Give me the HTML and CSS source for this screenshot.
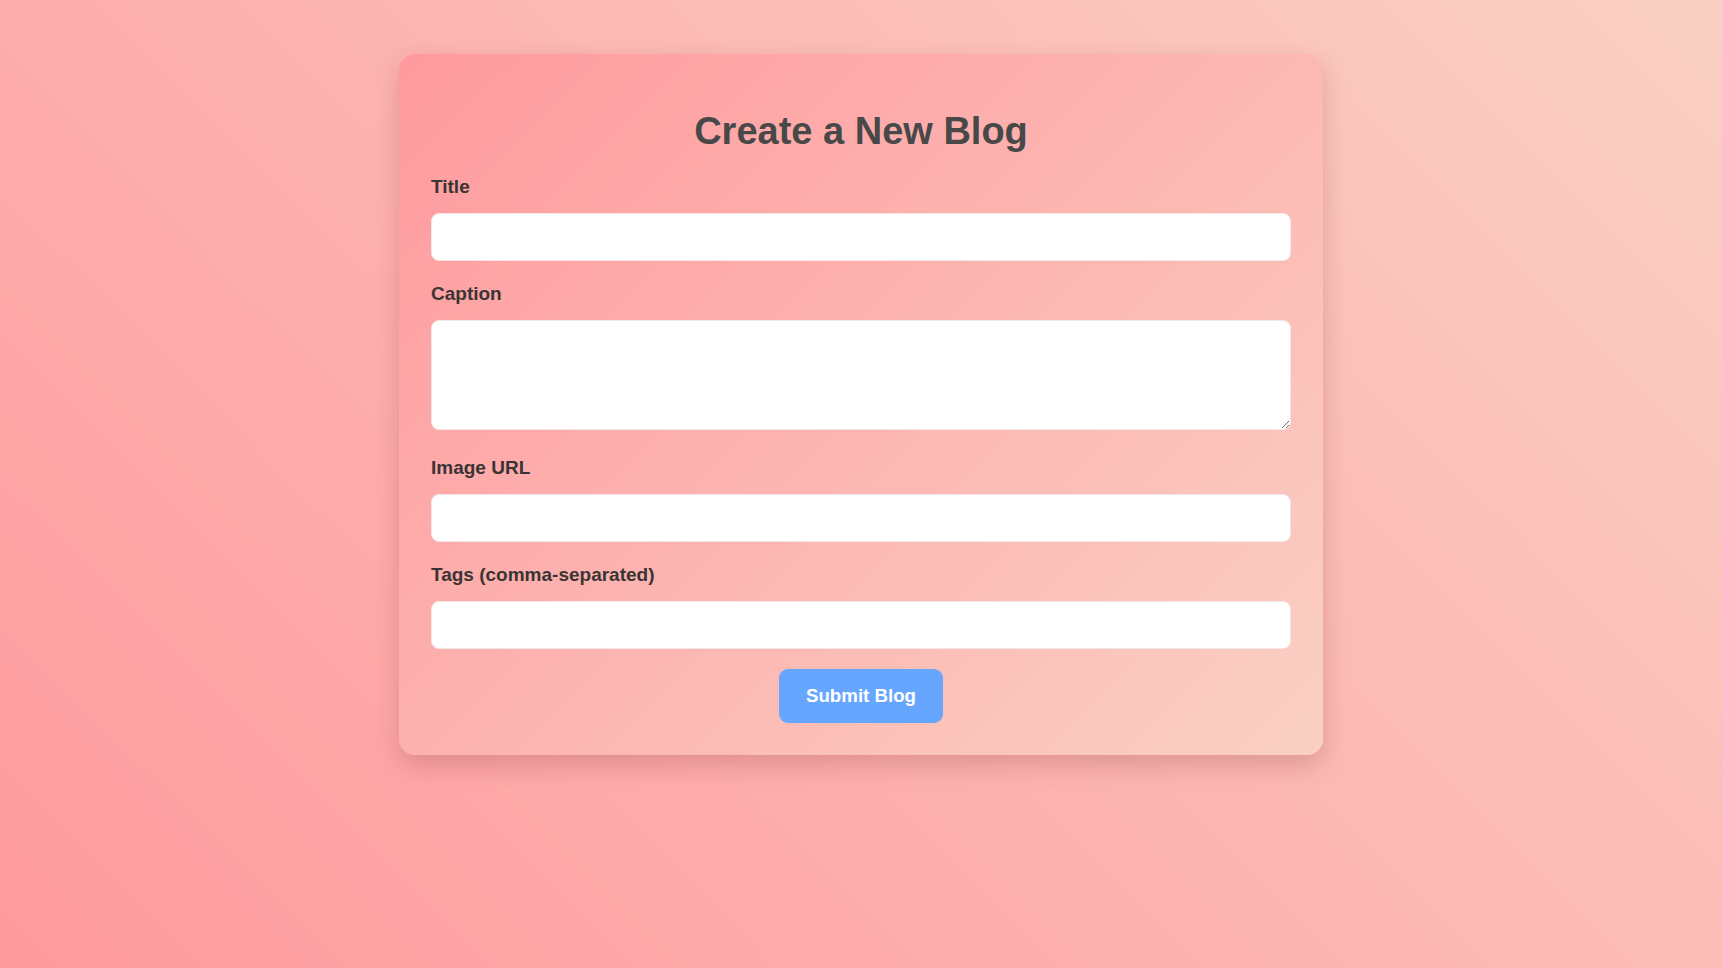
FILE: index.html
```html
<!DOCTYPE html>
<html lang="en">
<head>
<meta charset="utf-8">
<title>Create a New Blog</title>
<link rel="stylesheet" href="styles.css">
</head>
<body>
<div class="page">
  <form class="card">
    <h1 class="card-title">Create a New Blog</h1>
    <div class="field">
      <label class="field-label" for="title">Title</label>
      <input class="field-input" id="title" type="text">
    </div>
    <div class="field field-tall">
      <label class="field-label" for="caption">Caption</label>
      <textarea class="field-input field-textarea" id="caption"></textarea>
    </div>
    <div class="field">
      <label class="field-label" for="image">Image URL</label>
      <input class="field-input" id="image" type="text">
    </div>
    <div class="field">
      <label class="field-label" for="tags">Tags (comma-separated)</label>
      <input class="field-input" id="tags" type="text">
    </div>
    <div class="actions">
      <button class="submit-btn" type="button">Submit Blog</button>
    </div>
  </form>
</div>
</body>
</html>
```

FILE: styles.css
```css
* {
  box-sizing: border-box;
}

html, body {
  margin: 0;
  padding: 0;
  height: 100%;
}

body {
  font-family: "Liberation Sans", Arial, sans-serif;
  background: linear-gradient(45deg, #ff9a9e 0%, #fad0c4 100%);
  min-height: 968px;
}

.page {
  display: flex;
  justify-content: center;
  padding-top: 54px;
}

.card {
  width: 924px;
  padding: 55px 32px 32px;
  border-radius: 16px;
  background: linear-gradient(135deg, #ff9a9e 0%, #fad0c4 100%);
  box-shadow: 0 10px 25px rgba(120, 40, 40, 0.22);
  display: flex;
  flex-direction: column;
}

.card-title {
  margin: 0 0 23px;
  text-align: center;
  font-size: 38px;
  font-weight: 700;
  color: #484848;
  line-height: 44px;
}

.field {
  display: flex;
  flex-direction: column;
  margin-bottom: 22px;
}

.field-tall {
  margin-bottom: 27px;
}

.field-label {
  font-size: 19px;
  line-height: 21px;
  font-weight: 700;
  color: #3a3434;
  margin-bottom: 16px;
}

.field-input {
  display: block;
  width: 100%;
  height: 48px;
  border: 1px solid #f3e6e6;
  border-radius: 8px;
  background: #ffffff;
  font-family: "Liberation Sans", Arial, sans-serif;
  font-size: 16px;
  padding: 10px 14px;
  outline: none;
}

.field-textarea {
  height: 110px;
  resize: vertical;
}

.actions {
  display: flex;
  justify-content: center;
  margin-top: -2px;
}

.submit-btn {
  width: 164px;
  height: 54px;
  border: none;
  border-radius: 9px;
  background: #66a6ff;
  color: #ffffff;
  font-family: "Liberation Sans", Arial, sans-serif;
  font-size: 18.7px;
  font-weight: 700;
  cursor: pointer;
}
```
